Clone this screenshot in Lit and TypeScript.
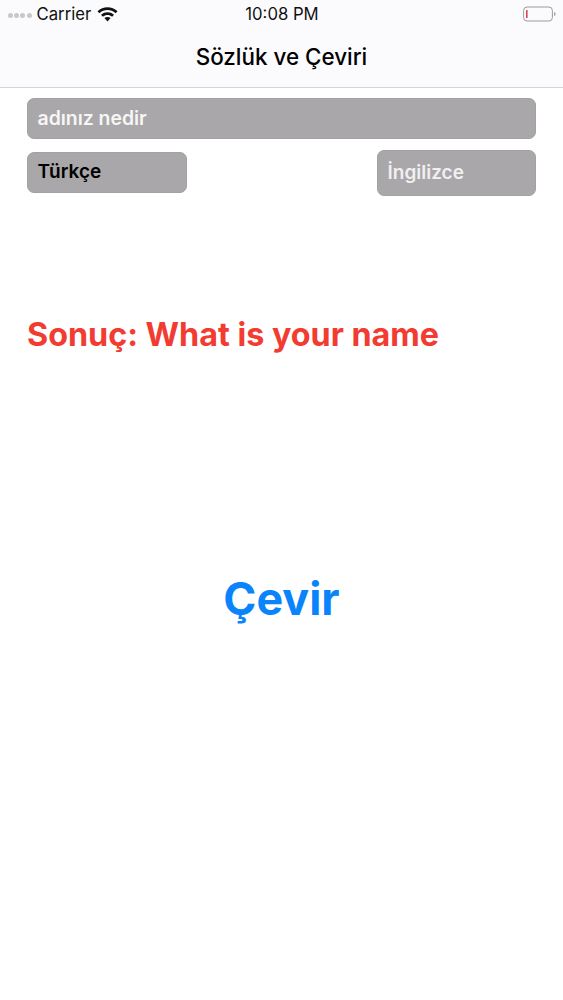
import { LitElement, html, css } from "lit";
import { customElement } from "lit/decorators.js";

@customElement("app-root")
export class AppRoot extends LitElement {
  static styles = css`
    :host { display: block; height: 1000px; background: #fff; font-family: Inter, "Liberation Sans", sans-serif; color: #000; overflow: hidden; }
    .head { background: #fbfafc; border-bottom: 1px solid #d5d5d7; height: 87px; display: flex; flex-direction: column; }
    .status { height: 27px; display: grid; grid-template-columns: 1fr auto 1fr; align-items: center; padding: 0 7px 0 8px; font-size: 16.7px; color: #111; }
    .left { display: flex; align-items: center; }
    .dots { display: flex; gap: 1.2px; margin-right: 5px; margin-top: 4px; }
    .dots i { width: 5px; height: 5px; border-radius: 50%; background: #c8c8ca; }
    .carrier { margin-right: 6px; }
    .right { display: flex; justify-content: flex-end; }
    .title { flex: 1; display: flex; align-items: center; justify-content: center; font-size: 22.4px; font-weight: 500; padding-bottom: 2px; }
    .main { padding: 10px 27px 0; display: flex; flex-direction: column; }
    .box { background: #a9a7a9; border-radius: 7px; box-sizing: border-box; display: flex; align-items: center; padding: 0 10px 2px; font-size: 19px; font-weight: 600; border: 1px solid #a3a1a3; padding-left: 9.5px; }
    .field { height: 41px; color: #f6f6f6; font-size: 19.4px; }
    .row { display: flex; justify-content: space-between; align-items: flex-start; margin-top: 11px; height: 46px; }
    .from { width: 160px; height: 41px; margin-top: 2px; color: #000; }
    .to { width: 159px; height: 46px; color: #f0f0f0; }
    .result { margin-top: 119px; height: 40px; line-height: 40px; font-size: 32.3px; font-weight: 700; color: #f23c32; }
    .go { margin-top: 217px; display: flex; justify-content: center; font-size: 44.8px; font-weight: 700; line-height: 54px; color: #0a84fb; }
  `;

  render() {
    return html`
      <header class="head">
        <div class="status">
          <div class="left">
            <span class="dots"><i></i><i></i><i></i><i></i></span>
            <span class="carrier">Carrier</span>
            <svg width="21" height="16" viewBox="0 0 21 16">
              <path d="M0.5 5.2C6 0 15 0 20.5 5.2L18.6 7.2C14 3 7 3 2.4 7.2Z" fill="#111"/>
              <path d="M4 8.7C7.6 5.4 13.4 5.4 17 8.7L15.1 10.7C12.4 8.400 8.6 8.4 5.9 10.7Z" fill="#111"/>
              <path d="M7.4 12.1C9.2 10.6 11.8 10.6 13.6 12.1L10.5 15.4Z" fill="#111"/>
            </svg>
          </div>
          <div>10:08 PM</div>
          <div class="right">
            <svg width="33" height="16" viewBox="0 0 33 16">
              <rect x="0.6" y="1" width="28.8" height="14" rx="3.5" fill="none" stroke="#9b9b9d" stroke-width="1"/>
              <rect x="3" y="4" width="1.6" height="8" rx="0.5" fill="#e0414f"/>
              <path d="M31 6v4c1-.3 1.6-1 1.6-2S32 6.300 31 6z" fill="#a8a8aa"/>
            </svg>
          </div>
        </div>
        <div class="title">Sözlük ve Çeviri</div>
      </header>
      <main class="main">
        <div class="box field">adınız nedir</div>
        <div class="row">
          <div class="box from">Türkçe</div>
          <div class="box to">İngilizce</div>
        </div>
        <div class="result">Sonuç: What is your name</div>
        <div class="go">Çevir</div>
      </main>
    `;
  }
}
